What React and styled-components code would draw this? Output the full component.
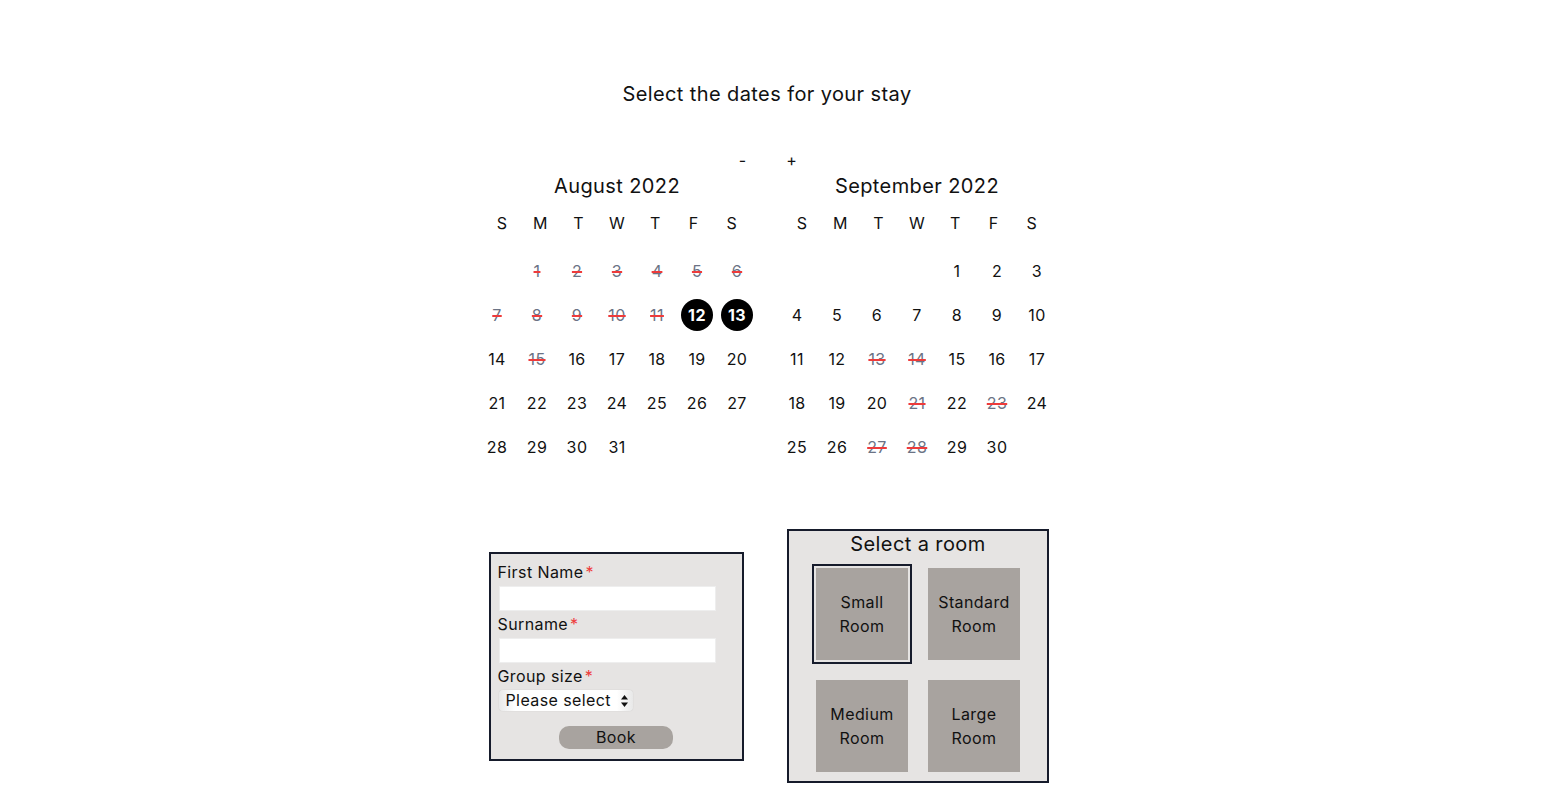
import React, { useState } from "react";
import styled, { createGlobalStyle } from "styled-components";

const GlobalStyle = createGlobalStyle`
    body {
        margin: 0;
        background: #ffffff;
        font-family: Inter, "Noto Sans", sans-serif;
        letter-spacing: 0.025em;
        color: #111111;
    }
`;

const Page = styled.div`
    display: flex;
    flex-flow: column nowrap;
    align-items: center;
    padding: 82px 13px 0 0;
`;

const Heading = styled.h1`
    margin: 0;
    font-size: 20px;
    font-weight: 400;
    line-height: 24px;
`;

const Nav = styled.div`
    display: flex;
    gap: 36px;
    margin-top: 44px;
    height: 20px;
    align-items: center;
`;

const NavButton = styled.button`
    border: none;
    background: none;
    padding: 0;
    width: 13px;
    font-family: inherit;
    font-size: 16px;
    color: #111;
    cursor: pointer;
`;

const Row = styled.div`
    display: flex;
    flex-flow: row nowrap;
    gap: 20px;
    align-items: ${(p) => p.$align || "flex-start"};
    margin-top: ${(p) => p.$top || 0}px;
`;

const Month = styled.div`
    width: 280px;
    display: flex;
    flex-flow: column nowrap;
    align-items: center;
`;

const MonthTitle = styled.h2`
    margin: 0;
    font-size: 20px;
    font-weight: 400;
    line-height: 24px;
`;

const WeekHeader = styled.div`
    display: grid;
    grid-template-columns: repeat(7, 1fr);
    width: 268px;
    margin-top: 13px;
    line-height: 24px;
    font-size: 16px;
    text-align: center;
`;

const Days = styled.div`
    display: grid;
    grid-template-columns: repeat(7, 40px);
    grid-auto-rows: 44px;
    margin-top: 14px;
`;

const Day = styled.div`
    display: flex;
    align-items: center;
    justify-content: center;
    font-size: 16px;
`;

const DayLabel = styled.span`
    display: flex;
    align-items: center;
    justify-content: center;
    width: 32px;
    height: 32px;
    border-radius: 50%;
    cursor: ${(p) => (p.$off ? "default" : "pointer")};
    color: ${(p) => (p.$picked ? "#fff" : p.$off ? "#6b7385" : "#111")};
    background: ${(p) => (p.$picked ? "#000" : "transparent")};
    font-weight: ${(p) => (p.$picked ? 700 : 400)};
    text-decoration: ${(p) => (p.$off ? "line-through" : "none")};
    text-decoration-color: #ee3b3b;
    text-decoration-thickness: 2px;
`;

const Column = styled.div`
    width: 280px;
    display: flex;
    justify-content: center;
`;

const Form = styled.form`
    box-sizing: border-box;
    width: 255px;
    margin-right: 2px;
    border: 2px solid #161b2b;
    background: #e6e4e3;
    padding: 8px 7px 10px 7px;
    display: flex;
    flex-flow: column nowrap;
    align-items: flex-start;
`;

const Label = styled.label`
    font-size: 16px;
    line-height: 20px;

    & span {
        color: #ee3b3b;
        margin-left: 2px;
    }
`;

const Input = styled.input`
    box-sizing: border-box;
    width: 217px;
    height: 25px;
    margin: 4px 0 3px 1px;
    border: 1px solid #eeeeee;
    background: #fff;
    outline: none;
`;

const SelectWrap = styled.div`
    position: relative;
    width: 134px;
    height: 21px;
    margin: 4px 0 0 1px;
`;

const Select = styled.select`
    appearance: none;
    box-sizing: border-box;
    width: 100%;
    height: 100%;
    border: none;
    border-radius: 4px;
    padding: 0 0 0 7px;
    font-family: inherit;
    letter-spacing: inherit;
    font-size: 16px;
    color: #111;
    background: linear-gradient(to right, #e8e8e8, #ffffff 12%, #ffffff 88%, #e8e8e8);
    box-shadow: 0 0 1px rgba(0, 0, 0, 0.2);
`;

const Arrows = styled.svg`
    position: absolute;
    right: 5px;
    top: 5px;
    pointer-events: none;
`;

const BookButton = styled.button`
    align-self: center;
    width: 114px;
    height: 23px;
    margin-top: 15px;
    border: none;
    border-radius: 10px;
    background: #a8a39f;
    font-family: inherit;
    letter-spacing: inherit;
    font-size: 16px;
    color: #111;
    cursor: pointer;
`;

const RoomBox = styled.div`
    box-sizing: border-box;
    width: 262px;
    margin-left: 2px;
    border: 2px solid #161b2b;
    background: #e6e4e3;
    padding: 1px 0 9px;
    display: flex;
    flex-flow: column nowrap;
    align-items: center;
`;

const RoomTitle = styled.h3`
    margin: 0;
    font-size: 20px;
    font-weight: 400;
    line-height: 24px;
`;

const RoomGrid = styled.div`
    display: grid;
    grid-template-columns: repeat(2, 92px);
    grid-auto-rows: 92px;
    gap: 20px;
    margin-top: 12px;
`;

const RoomTile = styled.button`
    border: none;
    padding: 0 4px;
    background: #a8a39f;
    font-family: inherit;
    letter-spacing: inherit;
    font-size: 16px;
    line-height: 24px;
    color: #111;
    cursor: pointer;
    outline: ${(p) => (p.$active ? "2px solid #161b2b" : "none")};
    outline-offset: 2px;
`;

const august = {
    name: "August 2022",
    offset: 1,
    length: 31,
    off: [1, 2, 3, 4, 5, 6, 7, 8, 9, 10, 11, 15],
};

const september = {
    name: "September 2022",
    offset: 4,
    length: 30,
    off: [13, 14, 21, 23, 27, 28],
};

const weekdays = ["S", "M", "T", "W", "T", "F", "S"];

const Calendar = ({ month, picked }) => (
    <Month>
        <MonthTitle>{month.name}</MonthTitle>
        <WeekHeader>
            {weekdays.map((d, i) => (
                <span key={i}>{d}</span>
            ))}
        </WeekHeader>
        <Days>
            {Array.from({ length: month.offset }).map((_, i) => (
                <Day key={"e" + i} />
            ))}
            {Array.from({ length: month.length }).map((_, i) => {
                const n = i + 1;
                return (
                    <Day key={n}>
                        <DayLabel $off={month.off.includes(n)} $picked={picked.includes(n)}>
                            {n}
                        </DayLabel>
                    </Day>
                );
            })}
        </Days>
    </Month>
);

const rooms = [
    ["Small", "Room"],
    ["Standard", "Room"],
    ["Medium", "Room"],
    ["Large", "Room"],
];

const App = () => {
    const [room, setRoom] = useState(0);
    return (
        <>
            <GlobalStyle />
            <Page>
                <Heading>Select the dates for your stay</Heading>
                <Nav>
                    <NavButton>-</NavButton>
                    <NavButton>+</NavButton>
                </Nav>
                <Row $top={4}>
                    <Calendar month={august} picked={[12, 13]} />
                    <Calendar month={september} picked={[]} />
                </Row>
                <Row $align="center" $top={60}>
                    <Column>
                        <Form onSubmit={(e) => e.preventDefault()}>
                            <Label>
                                First Name<span>*</span>
                            </Label>
                            <Input type="text" />
                            <Label>
                                Surname<span>*</span>
                            </Label>
                            <Input type="text" />
                            <Label>
                                Group size<span>*</span>
                            </Label>
                            <SelectWrap>
                                <Select defaultValue="">
                                    <option value="">Please select</option>
                                    <option value="1">1</option>
                                    <option value="2">2</option>
                                    <option value="3">3</option>
                                    <option value="4">4</option>
                                </Select>
                                <Arrows width="7" height="12" viewBox="0 0 7 12">
                                    <path d="M3.5 0 L7 4.5 H0 Z" fill="#111" />
                                    <path d="M3.5 12 L7 7.5 H0 Z" fill="#111" />
                                </Arrows>
                            </SelectWrap>
                            <BookButton type="submit">Book</BookButton>
                        </Form>
                    </Column>
                    <Column>
                        <RoomBox>
                            <RoomTitle>Select a room</RoomTitle>
                            <RoomGrid>
                                {rooms.map((r, i) => (
                                    <RoomTile key={i} $active={room === i} onClick={() => setRoom(i)}>
                                        {r[0]}
                                        <br />
                                        {r[1]}
                                    </RoomTile>
                                ))}
                            </RoomGrid>
                        </RoomBox>
                    </Column>
                </Row>
            </Page>
        </>
    );
};

export default App;
